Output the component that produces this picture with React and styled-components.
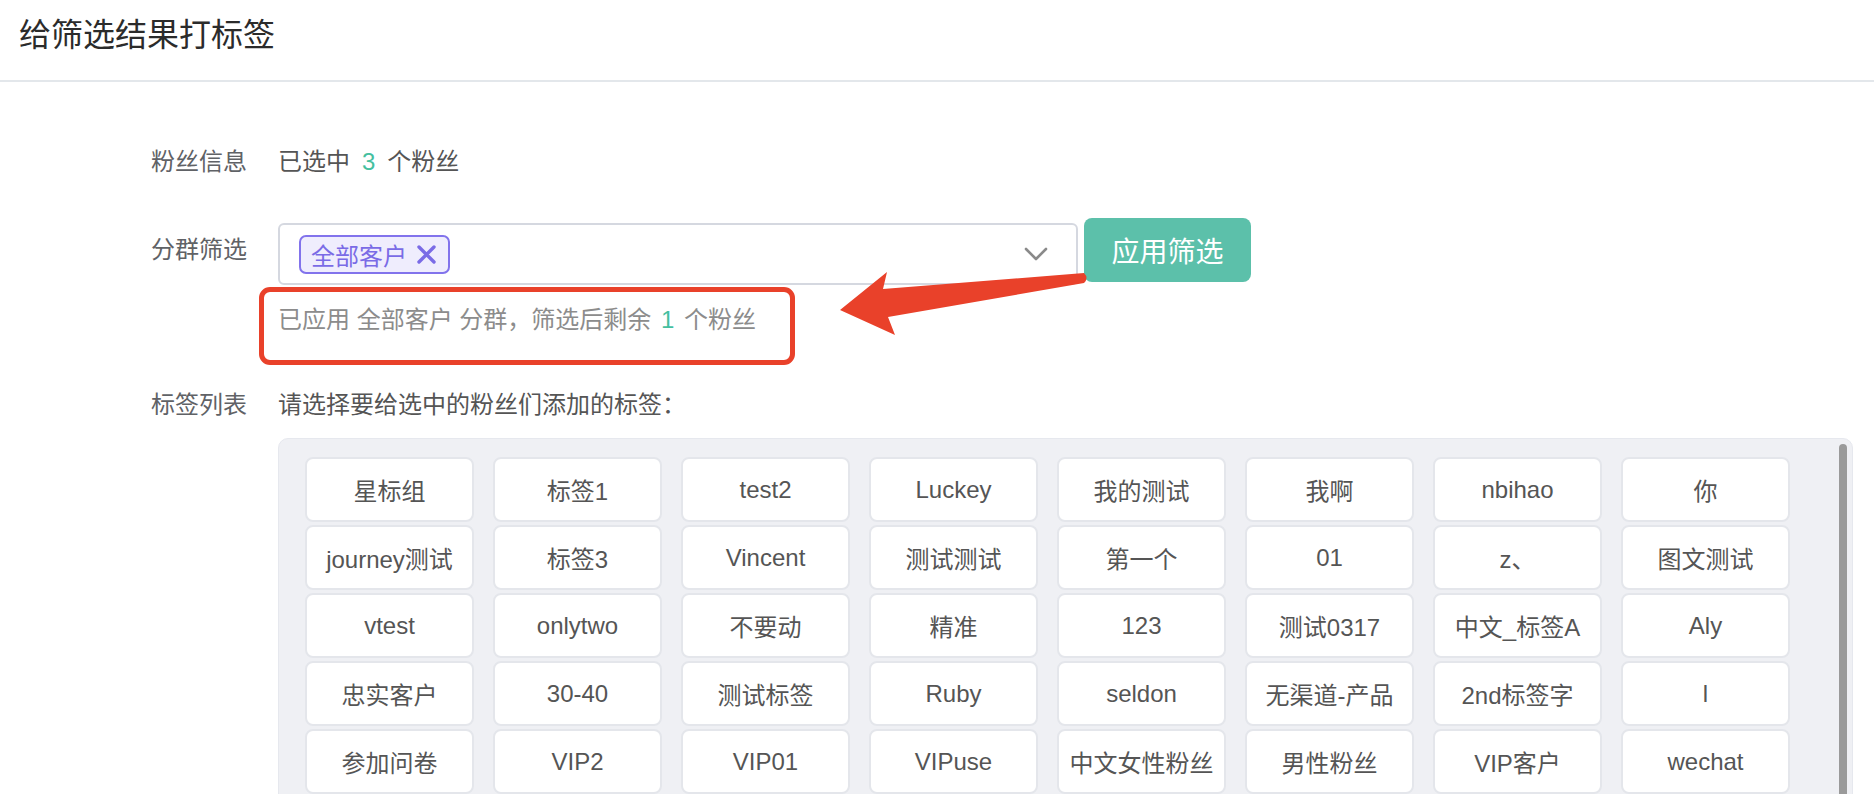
import React from "react";
import styled, { createGlobalStyle } from "styled-components";

const GlobalStyle = createGlobalStyle`
  html, body {
    margin: 0;
    padding: 0;
    overflow: hidden;
    background: #fff;
    font-family: "Liberation Sans", "Noto Sans CJK SC", sans-serif;
  }
  * {
    box-sizing: border-box;
  }
`;

const Page = styled.div`
  position: relative;
  width: 100%;
  height: 794px;
`;
const Header = styled.div`
  padding: 15px 19px 25px;
  border-bottom: 2px solid #e3e7eb;
`;
const Title = styled.h1`
  margin: 0;
  font-size: 32px;
  line-height: 40px;
  font-weight: normal;
  color: #2b2b2b;
`;
const Form = styled.div`
  padding: 63px 0 0 151px;
`;
const FieldRow = styled.div`
  display: flex;
  align-items: flex-start;
  margin-top: ${(props) => props.$top || 0}px;
`;
const Label = styled.div`
  width: 127px;
  flex-shrink: 0;
  margin-top: ${(props) => props.$top || 0}px;
  font-size: 24px;
  line-height: 34px;
  color: #606266;
`;
const Field = styled.div`
  display: flex;
  flex-direction: column;
`;
const Text = styled.div`
  font-size: 24px;
  line-height: 34px;
  color: #555;
`;
const Count = styled.span`
  color: #45bf9f;
  margin: 0 ${(props) => props.$space || 0}px;
`;
const FilterLine = styled.div`
  display: flex;
  align-items: flex-start;
  gap: 6px;
`;
const Select = styled.div`
  width: 800px;
  height: 62px;
  margin-top: 5px;
  display: flex;
  align-items: center;
  justify-content: space-between;
  padding: 0 28px 0 19px;
  border: 2px solid #d5d8e0;
  border-radius: 6px;
  background: #fff;
`;
const Chip = styled.span`
  display: inline-flex;
  align-items: center;
  gap: 9px;
  height: 39px;
  padding: 0 11px 0 10px;
  border: 2px solid #8273ec;
  border-radius: 7px;
  background: #efedfd;
  color: #7a6be6;
  font-size: 24px;
`;
const ApplyButton = styled.button`
  width: 167px;
  height: 64px;
  border: none;
  border-radius: 8px;
  background: #5cc0aa;
  color: #fff;
  font-family: inherit;
  font-size: 28px;
  cursor: pointer;
`;
const Hint = styled.div`
  position: relative;
  margin-top: 18px;
  font-size: 24px;
  line-height: 34px;
  color: #8c8c8c;

  &::after {
    content: "";
    position: absolute;
    left: -19px;
    top: -16px;
    width: 526px;
    height: 68px;
    border: 5px solid #e9412a;
    border-radius: 11px;
  }
`;
const TagPanel = styled.div`
  width: 1575px;
  height: 380px;
  margin-top: 16px;
  display: flex;
  background: #eff0f4;
  border: 1px solid #e6e8ee;
  border-radius: 10px;
  overflow: hidden;
`;
const TagGrid = styled.div`
  display: grid;
  grid-template-columns: repeat(8, 169px);
  grid-auto-rows: 65px;
  column-gap: 19px;
  row-gap: 3px;
  padding: 18px 0 0 26px;
`;
const ScrollTrack = styled.div`
  display: flex;
  width: 18px;
  margin-left: auto;
  padding: 5px;
`;
const ScrollThumb = styled.div`
  flex: 1;
  background: #9a9a9a;
  border-radius: 4px;
`;
const TagCell = styled.div`
  display: flex;
  align-items: center;
  justify-content: center;
  background: #fff;
  border: 2px solid #e4e6eb;
  border-radius: 8px;
  font-size: 24px;
  color: #555;
  white-space: nowrap;
  cursor: pointer;
`;
const Arrow = styled.svg`
  position: absolute;
  left: 830px;
  top: 260px;
  pointer-events: none;
`;

const tags = [
  "星标组", "标签1", "test2", "Luckey", "我的测试", "我啊", "nbihao", "你",
  "journey测试", "标签3", "Vincent", "测试测试", "第一个", "01", "z、", "图文测试",
  "vtest", "onlytwo", "不要动", "精准", "123", "测试0317", "中文_标签A", "Aly",
  "忠实客户", "30-40", "测试标签", "Ruby", "seldon", "无渠道-产品", "2nd标签字", "l",
  "参加问卷", "VIP2", "VIP01", "VIPuse", "中文女性粉丝", "男性粉丝", "VIP客户", "wechat",
];

function CloseIcon() {
  return (
    <svg width="21" height="21" viewBox="0 0 21 21">
      <path
        d="M3 3 L18 18 M18 3 L3 18"
        stroke="#7a6be6"
        strokeWidth="3.4"
        strokeLinecap="round"
        fill="none"
      />
    </svg>
  );
}

function Chevron() {
  return (
    <svg width="24" height="14" viewBox="0 0 24 14">
      <path
        d="M2 2 L12 12 L22 2"
        stroke="#8a8a8a"
        strokeWidth="2.6"
        strokeLinecap="round"
        strokeLinejoin="round"
        fill="none"
      />
    </svg>
  );
}

export default function App() {
  return (
    <Page>
      <GlobalStyle />
      <Header>
        <Title>给筛选结果打标签</Title>
      </Header>
      <Form>
        <FieldRow>
          <Label>粉丝信息</Label>
          <Text>
            已选中<Count $space={12}>3</Count>个粉丝
          </Text>
        </FieldRow>

        <FieldRow $top={39}>
          <Label $top={15}>分群筛选</Label>
          <Field>
            <FilterLine>
              <Select>
                <Chip>
                  全部客户
                  <CloseIcon />
                </Chip>
                <Chevron />
              </Select>
              <ApplyButton>应用筛选</ApplyButton>
            </FilterLine>
            <Hint>
              已应用 全部客户 分群，筛选后剩余 <Count $space={3}>1</Count> 个粉丝
            </Hint>
          </Field>
        </FieldRow>

        <FieldRow $top={51}>
          <Label>标签列表</Label>
          <Field>
            <Text>请选择要给选中的粉丝们添加的标签：</Text>
            <TagPanel>
              <TagGrid>
                {tags.map((t, i) => (
                  <TagCell key={i}>{t}</TagCell>
                ))}
              </TagGrid>
              <ScrollTrack>
                <ScrollThumb />
              </ScrollTrack>
            </TagPanel>
          </Field>
        </FieldRow>
      </Form>

      <Arrow width="265" height="85" viewBox="0 0 265 85">
        <path
          d="M10 50 L57 12 L53 29 L254 13 Q259 18 254 23 L58 57 L65 75 Z"
          fill="#e9412a"
        />
      </Arrow>
    </Page>
  );
}
